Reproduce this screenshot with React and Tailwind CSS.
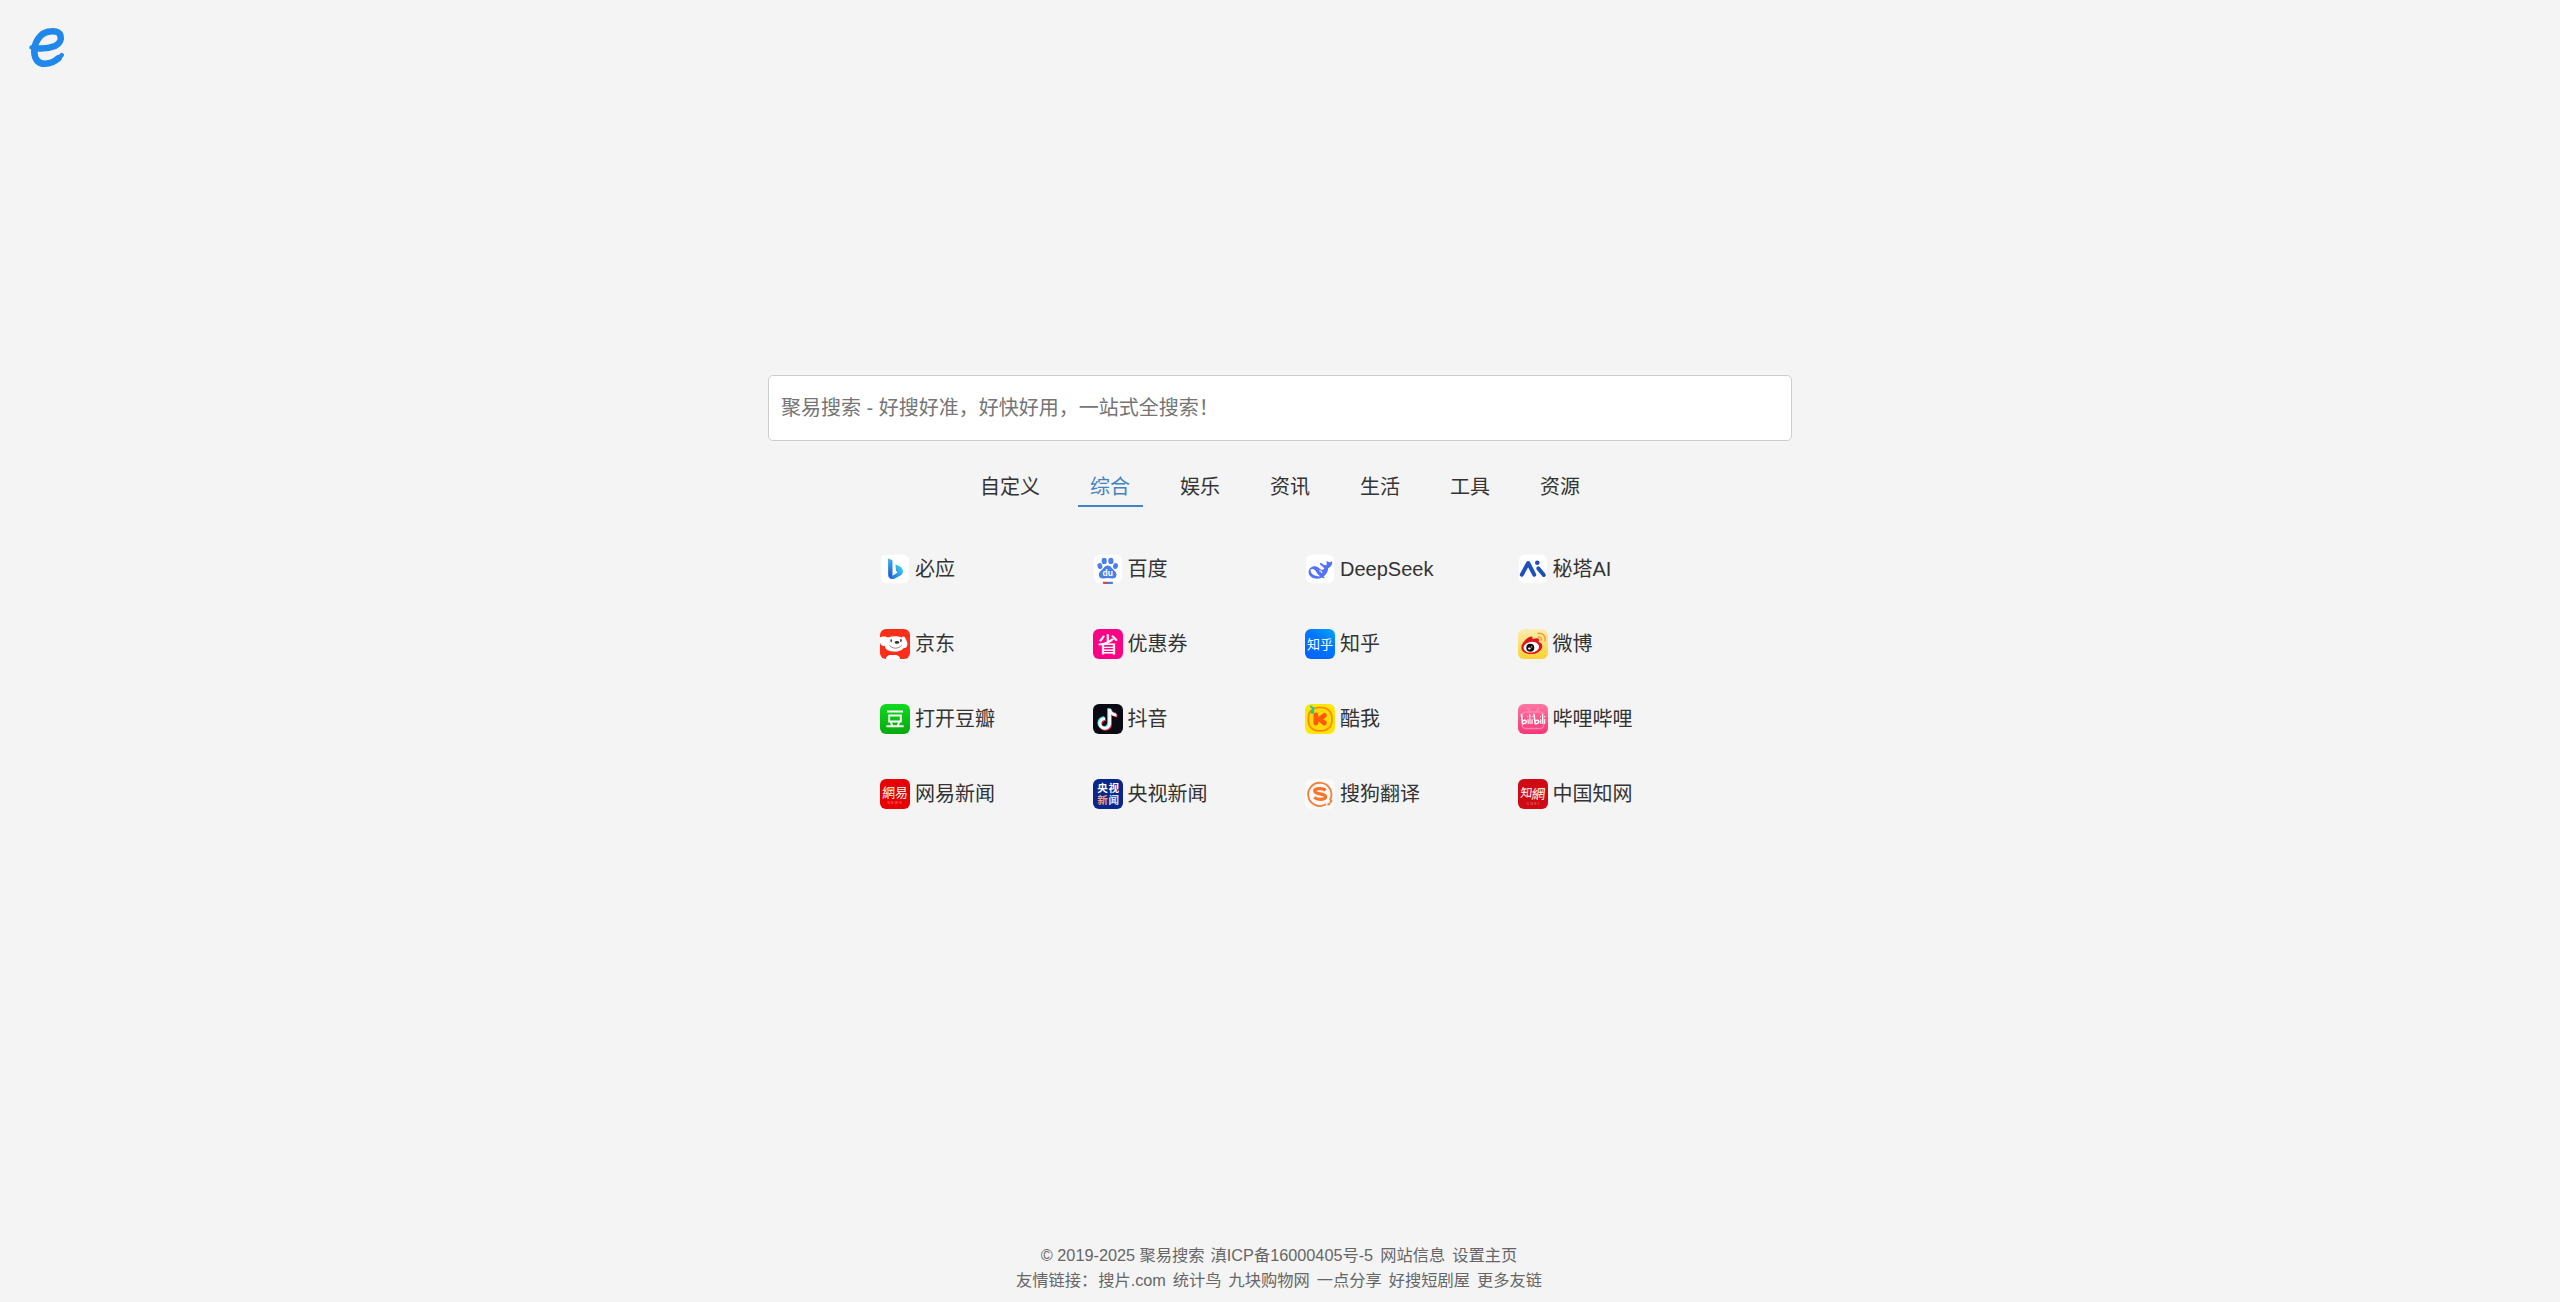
import React from "react";

const cjk = "font-['Noto_Sans_CJK_SC',sans-serif]";

function Tile({ children, fill }) {
  return (
    <svg viewBox="0 0 30 30" className={"block size-[30px] shrink-0 overflow-visible " + cjk}>
      <rect width="30" height="30" rx="6" fill={fill} />
      {children}
    </svg>
  );
}

function WhiteTile({ children }) {
  return (
    <svg viewBox="0 0 30 30" className={"block size-[30px] shrink-0 overflow-visible " + cjk}>
      <rect x="0.6" y="0.6" width="28.8" height="28.8" rx="5.6" fill="#fff" stroke="#efefef" strokeWidth="0.4" />
      {children}
    </svg>
  );
}

function Bing() {
  return (
    <WhiteTile>
      <defs>
        <linearGradient id="bing-stem" x1="0" y1="0" x2="0" y2="1">
          <stop offset="0" stopColor="#3fb0f2" />
          <stop offset="1" stopColor="#2158d8" />
        </linearGradient>
        <linearGradient id="bing-bowl" x1="0" y1="1" x2="1" y2="0.2">
          <stop offset="0" stopColor="#1f62e0" />
          <stop offset="0.6" stopColor="#2f9df0" />
          <stop offset="1" stopColor="#3fdcd0" />
        </linearGradient>
      </defs>
      <path d="M15.400 10.600c4.400 1.500 7.600 3 7.600 6.800 0 2-1.200 3.200-2.600 4.100L14.400 24.700c-2.800 1.300-6.300-.6-6.300-3.800l4.600.6 5-3-1.600-1.400z" fill="url(#bing-bowl)" />
      <path d="M8.100 4.400l3.200 1.300c.9.400 1.200.8 1.200 1.800V19.500c0 2.500-1.100 3.400-2.300 3.100-1.300-.4-2.100-1.500-2.100-3.300z" fill="url(#bing-stem)" />
    </WhiteTile>
  );
}

function Baidu() {
  return (
    <WhiteTile>
      <g fill="#4a7fe8">
        <ellipse cx="11.200" cy="6.900" rx="2.600" ry="3.200" />
        <ellipse cx="17.900" cy="6.900" rx="2.600" ry="3.200" />
        <ellipse cx="6.900" cy="12.100" rx="2.400" ry="3" transform="rotate(-15 6.900 12.100)" />
        <ellipse cx="22.500" cy="12.100" rx="2.400" ry="3" transform="rotate(15 22.500 12.100)" />
        <path d="M14.700 11.500c2 0 3.300 1.400 4.300 2.800 1.100 1.600 4.500 3.300 4.500 6.500 0 2.700-1.900 3.800-4.300 3.800-1.500 0-2.900-.5-4.500-.5s-3 .5-4.500.5c-2.400 0-4.300-1.100-4.300-3.800 0-3.200 3.400-4.900 4.500-6.500 1-1.400 2.300-2.800 4.300-2.800z" />
      </g>
      <text x="14.700" y="22.300" fontSize="8.500" fontWeight="700" fill="#fff" textAnchor="middle" fontFamily="Liberation Sans, sans-serif">du</text>
      <path d="M10 27.700h5v2.300h-4.500q-1.500-1.200-.5-2.300z" fill="#cf4a4e" />
      <path d="M15 27.700h4.500q1.500 1.200 0 2.300h-4.500z" fill="#4a7fe0" />
    </WhiteTile>
  );
}

function DeepSeek() {
  return (
    <WhiteTile>
      <path
        d="M26.900 7.200c-.5 0-1 .9-2.200 1.100-1.600.2-2.200-1.300-2.800-1.300-.5 0-.4 1-.2 1.900.3 1.500-.2 2.300-1.200 2.400-1.300.1-2.600-.9-3.500-1.700-1.400-1.200-2.800-.3-1.800.9 1 1.200 3 2.200 4 4-.6 1.300-2 1.500-3.400.9-1.600-.8-2.500-2.700-4.800-3-4.200-.6-7.400 2.300-7.400 5.600 0 4 3.700 6.700 8.800 6.700 1.800 0 3-.4 4.200-1.200 1 .6 2.800.9 3 .4.200-.5-.9-.9-1-1.500 2.800-2.100 4.400-4.800 4.600-8.200 2.300-.8 3.900-3.100 4-5.700 0-.7 0-1.200-.3-1.300z"
        fill="#5372fb"
      />
      <path d="M5.500 15.600c1.400-1.300 3.700-.7 4.900 1 1.400 1.900 1.900 3.700 3.900 4.900 1 .6.4 1.200-.8 1-1.300-.3-1.900-.9-2.600-.6-2.700-.3-5.800-3.300-5.400-6.300z" fill="#fff" />
      <path d="M14.600 16.700c1.300 0 2.200.9 2.100 2.100" stroke="#fff" strokeWidth="1.100" fill="none" strokeLinecap="round" />
    </WhiteTile>
  );
}

function Metaso() {
  return (
    <WhiteTile>
      <g stroke="#1f4fba" strokeWidth="4" strokeLinecap="round" strokeLinejoin="round" fill="none">
        <path d="M3.800 20.700L10.200 9 16.200 20.700" />
        <path d="M20.300 14.400L25.800 21" />
      </g>
      <circle cx="19.300" cy="8.700" r="2.300" fill="#1f4fba" />
    </WhiteTile>
  );
}

function JD() {
  return (
    <Tile fill="#ff2e1b">
      <path d="M0 12.500V8.600c2.400-1.800 6.200-1.100 8.200 0C12 6.800 18 6.800 21.600 8.400c.9-1.500 2.800-1.200 3.500.3 1.700 2.800 2.900 5.800 2 8.200-.5 1.600-2.100 2.400-3.100 1.800C22 21.800 17 23 13 22.600 7 22 5 19.500 4.800 16.700 2.500 17.500.5 16 0 13.500z" fill="#fff" />
      <path d="M6 30c0-2.300 1.800-3.600 4-3.900h6c2.200.3 4 1.600 4 3.900z" fill="#fff" />
      <ellipse cx="11.200" cy="11.600" rx=".9" ry="1.600" fill="#544a4a" />
      <ellipse cx="20.900" cy="11.400" rx=".9" ry="1.600" fill="#544a4a" />
      <ellipse cx="17" cy="13.400" rx="2.200" ry="1.300" fill="#322b2d" />
      <path d="M9.800 16.600c1.900 3.300 8.800 3.600 11.600.2" stroke="#8b7c7c" strokeWidth=".9" fill="none" strokeLinecap="round" />
    </Tile>
  );
}

function Coupon() {
  return (
    <Tile fill="#ff0084">
      <text x="15" y="22.900" fontSize="21" fontWeight="500" fill="#fff" textAnchor="middle">省</text>
    </Tile>
  );
}

function Zhihu() {
  return (
    <Tile fill="url(#zhihu-bg)">
      <defs>
        <linearGradient id="zhihu-bg" x1="0.200" y1="1" x2="0.900" y2="0">
          <stop offset="0" stopColor="#0063ff" />
          <stop offset="0.600" stopColor="#0078ff" />
          <stop offset="1" stopColor="#00a2ff" />
        </linearGradient>
      </defs>
      <text x="15" y="20" fontSize="13" fontWeight="400" fill="#fff" textAnchor="middle">知乎</text>
    </Tile>
  );
}

function Weibo() {
  return (
    <Tile fill="url(#weibo-bg)">
      <defs>
        <linearGradient id="weibo-bg" x1="0" y1="0" x2="0" y2="1">
          <stop offset="0" stopColor="#fbeeb4" />
          <stop offset="1" stopColor="#ffd02e" />
        </linearGradient>
      </defs>
      <path d="M13.300 7.400c1.500.2 1.400 1.700 1.100 2.800 2.400-1 5.600-1.600 6.400-.2.500.9.200 2-.2 3 2.200.6 3.800 2 3.600 4.400-.4 4.600-6 7.800-11.700 7.700-5-.1-9.300-2.600-9.200-6.800.1-4.400 6.800-11.200 10-10.900z" fill="#e0141e" />
      <ellipse cx="13.300" cy="18.200" rx="7.800" ry="5.300" transform="rotate(-8 13.300 18.200)" fill="#fff" />
      <circle cx="12.300" cy="18.700" r="4" fill="#141110" />
      <ellipse cx="11.400" cy="19.500" rx="1.400" ry="1.100" fill="#fff" />
      <circle cx="13.700" cy="17.800" r=".6" fill="#fff" />
      <g fill="none" stroke="#f9a13a" strokeWidth="1.600" strokeLinecap="round">
        <path d="M20.200 4.400c4.400-.8 8 2.700 6.700 7.400" />
        <path d="M20.400 8c2.200-.4 3.600 1.200 3 3.200" />
      </g>
    </Tile>
  );
}

function Douban() {
  return (
    <Tile fill="url(#douban-bg)">
      <defs>
        <linearGradient id="douban-bg" x1="0" y1="0" x2="0" y2="1">
          <stop offset="0" stopColor="#10da1e" />
          <stop offset="1" stopColor="#06a80e" />
        </linearGradient>
      </defs>
      <g fill="none" stroke="#fff" strokeWidth="1.900">
        <path d="M7 7.500h16M6.400 22.300h17.200" />
        <path d="M9.200 11.500h11.600v6H9.200zM10.800 18l1.500 4M19.200 18l-1.500 4" />
      </g>
    </Tile>
  );
}

function Douyin() {
  const d = "M16.300 4.800v14.600a4.900 4.900 0 1 1-4.600-4.900M16.300 5c.5 3.600 3 5.600 6.800 6";
  return (
    <Tile fill="#0a0a14">
      <g fill="none" strokeWidth="3.200">
        <path d={d} stroke="#2bece9" transform="translate(-.5 -.6)" />
        <path d={d} stroke="#ff2b57" transform="translate(1.100 .8)" />
        <path d={d} stroke="#fff" transform="translate(.3 .1)" strokeWidth="2.900" />
      </g>
    </Tile>
  );
}

function Kuwo() {
  return (
    <Tile fill="#ffe60a">
      <rect x="3.300" y="3.500" width="23.600" height="23.400" rx="10" fill="#ffd90a" stroke="#ff8a00" strokeWidth="1.700" />
      <path d="M10.900 11v8.200M19.400 11.400L14.500 15.200l4.900 3.800" stroke="#ff5a0a" strokeWidth="4.800" strokeLinecap="round" strokeLinejoin="round" fill="none" />
      <path d="M5.800 2.600L8.600 4.400 7.400 8" stroke="#27c3a5" strokeWidth="2" fill="none" strokeLinecap="round" />
      <circle cx="7.300" cy="8" r="1.900" fill="#27c3a5" />
    </Tile>
  );
}

function Bilibili() {
  return (
    <Tile fill="url(#bili-bg)">
      <defs>
        <linearGradient id="bili-bg" x1="0" y1="0" x2="0" y2="1">
          <stop offset="0" stopColor="#fd76a2" />
          <stop offset="1" stopColor="#fc3675" />
        </linearGradient>
      </defs>
      <g fill="none" stroke="#fe88ae" strokeWidth="1.300" strokeLinecap="round">
        <rect x="4.300" y="8" width="21.400" height="16.500" rx="3.500" />
        <path d="M9.500 4.500L12 7.500M20.500 4.500L18 7.500" />
      </g>
      <g stroke="#fff" strokeWidth="1.500" fill="none" strokeLinecap="round" strokeLinejoin="round">
        <path d="M3.400 10.200L4.600 19.800c2.200.2 3.900-1.100 3.700-2.500-.3-1.300-2.100-1.200-3.600-.3" />
        <path d="M16 10.200L17.200 19.800c2.200.2 3.900-1.100 3.700-2.500-.3-1.300-2.100-1.200-3.600-.3" />
        <path d="M10 15.500l.2 4M11.800 10.300l.3 9.200M14.100 15.500l-.1 4M22.700 15.500l.1 4M24.500 10.300l.2 9.200M26.700 15.500l-.1 4" strokeWidth="1.100" />
        <path d="M9.700 12.600v.1M14.200 12.600v.1M22.500 12.600v.1M26.800 12.600v.1" strokeWidth="1.100" />
      </g>
    </Tile>
  );
}

function Netease() {
  return (
    <Tile fill="#e60000">
      <text x="15" y="18" fontSize="12.800" fontWeight="400" fill="#fff" textAnchor="middle">網易</text>
      <text x="15.200" y="24.600" fontSize="3.600" fill="#ff8080" textAnchor="middle" letterSpacing="1.200" fontFamily="Liberation Sans, sans-serif">NEWS</text>
    </Tile>
  );
}

function CctvNews() {
  return (
    <Tile fill="#08268c">
      <g fontSize="10.500" fontWeight="700">
        <text x="4.200" y="12.900" fill="#fff">央</text>
        <text x="15.500" y="12.900" fill="#fff">视</text>
        <text x="4.200" y="25" fill="#f0a07c">新</text>
        <text x="15.500" y="25" fill="#d4e6ff">闻</text>
      </g>
    </Tile>
  );
}

function Sogou() {
  return (
    <Tile fill="#fafafa">
      <path d="M25.200 20.500A11.600 11.600 0 1 0 20.500 25.500" fill="none" stroke="#f4803a" strokeWidth="1.900" strokeLinecap="round" />
      <path d="M20.500 11.500c-2-2.400-10.800-2.700-10.800.5 0 3.600 10.900 2.200 10.900 5.800 0 3.300-8.400 3.500-11.400.6" fill="none" stroke="#f9752a" strokeWidth="3.200" />
      <path d="M26.200 21.500l-.7 1.800M23.400 25.300l.8-.2" stroke="#f4803a" strokeWidth="2.200" strokeLinecap="round" />
    </Tile>
  );
}

function Cnki() {
  return (
    <Tile fill="#d00a14">
      <text x="2" y="18.500" fontSize="12" fontWeight="400" fill="#fff" transform="skewX(-6) translate(2 0)">知</text>
      <text x="13.300" y="19.600" fontSize="13.500" fontWeight="400" fill="#fff" transform="skewX(-6) translate(2 0)">網</text>
      <text x="15.500" y="26.200" fontSize="3.400" fill="#f08a8a" textAnchor="middle" letterSpacing="1.300" fontFamily="Liberation Sans, sans-serif">CNKI</text>
    </Tile>
  );
}

const sites = [
  ["必应", Bing],
  ["百度", Baidu],
  ["DeepSeek", DeepSeek],
  ["秘塔AI", Metaso],
  ["京东", JD],
  ["优惠券", Coupon],
  ["知乎", Zhihu],
  ["微博", Weibo],
  ["打开豆瓣", Douban],
  ["抖音", Douyin],
  ["酷我", Kuwo],
  ["哔哩哔哩", Bilibili],
  ["网易新闻", Netease],
  ["央视新闻", CctvNews],
  ["搜狗翻译", Sogou],
  ["中国知网", Cnki],
];

const tabs = ["自定义", "综合", "娱乐", "资讯", "生活", "工具", "资源"];

export default function App() {
  return (
    <div className="flex h-[1302px] w-full flex-col items-center overflow-hidden bg-[#f4f4f4] font-['Liberation_Sans','Noto_Sans_CJK_SC',sans-serif] text-xl text-[#333]">
      <header className="h-[375px] w-full pt-[24px] pl-[24px]">
        <svg viewBox="24 24 48 48" className="size-12" fill="none" stroke="#2088ec" strokeLinecap="round" strokeLinejoin="round">
          <path strokeWidth="6.600" d="M35.500 48.200C42 48.900 50 48 55 46 59.800 43.800 61.600 39.500 60.400 35.500 59.200 31.300 53.500 30.700 48 31.700 39.500 33.700 34 43 34.300 52 34.500 60 38.500 63.700 45 63.700 50 63.700 55 61.500 58.500 58.200" />
          <path strokeWidth="4.400" d="M31.500 47.400l4 .8M57 60c2-1.500 3.500-3.200 4.800-5" />
        </svg>
      </header>

      <main className="flex w-[1024px] flex-1 flex-col">
        <input
          type="text"
          placeholder="聚易搜索 - 好搜好准，好快好用，一站式全搜索！"
          className="h-[66px] w-full rounded-[5px] border border-[#ccc] bg-white px-3 outline-none placeholder:text-[#757575]"
        />
        <nav className="mt-[27px] flex justify-center gap-[25px]">
          {tabs.map((tab, i) => (
            <a
              key={tab}
              className={
                i === 1
                  ? "h-[39px] border-b-2 border-[#4183c4] px-[12.500px] leading-[39px] text-[#4183c4]"
                  : "h-[39px] px-[12.500px] leading-[39px]"
              }
            >
              {tab}
            </a>
          ))}
        </nav>
        <section className="mt-[47px] ml-[112px] grid w-[850px] grid-cols-4 gap-y-[45px]">
          {sites.map(([name, Icon]) => (
            <a key={name} className="flex h-[30px] items-center gap-[5px]">
              <Icon />
              <span className="leading-[30px]">{name}</span>
            </a>
          ))}
        </section>
      </main>

      <footer className="mr-[2px] mb-[9px] text-[16.250px] leading-[25.250px] text-[#666]">
        <div className="flex justify-center gap-[7px]">
          <span className="-mr-px">© 2019-2025 聚易搜索</span>
          <span>滇ICP备16000405号-5</span>
          <span>网站信息</span>
          <span>设置主页</span>
        </div>
        <div className="flex justify-center gap-[7px]">
          <span className="-mr-[6px]">友情链接：</span>
          <span>搜片.com</span>
          <span>统计鸟</span>
          <span>九块购物网</span>
          <span>一点分享</span>
          <span>好搜短剧屋</span>
          <span>更多友链</span>
        </div>
      </footer>
    </div>
  );
}
